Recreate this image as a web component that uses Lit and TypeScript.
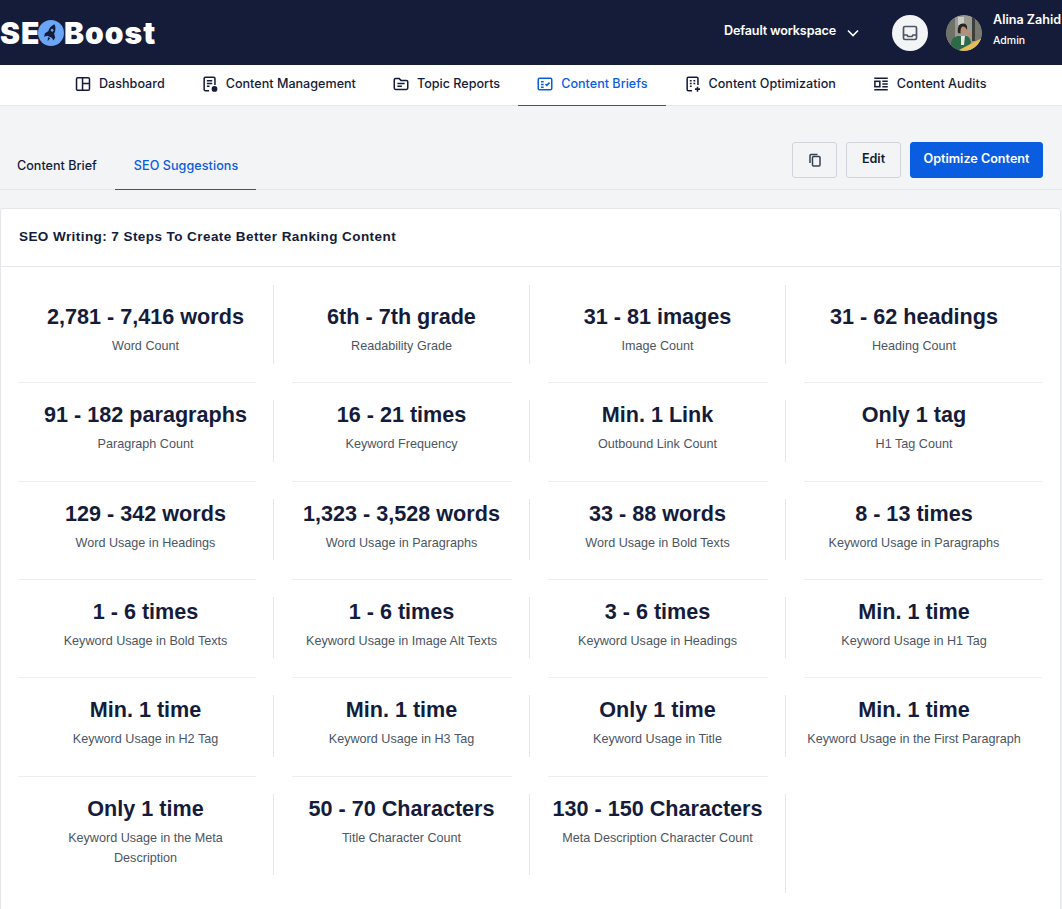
import { LitElement, html, css, svg } from "lit";
import { customElement } from "lit/decorators.js";

const navItems: [string, any, boolean][] = [
  ["Dashboard", svg`<rect x="2.8" y="3" width="14.400" height="14" rx="1.500"/><path d="M9.500 3v14M9.500 9.500h7.700"/>`, false],
  ["Content Management", svg`<path d="M9 17.500H5a1.500 1.500 0 0 1-1.500-1.500V4A1.500 1.500 0 0 1 5 2.500h9A1.500 1.500 0 0 1 15.500 4v7"/><path d="M6.500 6.500h6M6.500 9.500h6M6.500 12.500h3"/><circle cx="15" cy="15.500" r="3.200" fill="currentColor" stroke="none"/>`, false],
  ["Topic Reports", svg`<path d="M2.500 5.500A1.500 1.500 0 0 1 4 4h4l2 2h6a1.500 1.500 0 0 1 1.500 1.500v7A1.500 1.500 0 0 1 16 16H4a1.500 1.500 0 0 1-1.500-1.500z"/><path d="M6 9.500h8M6 12.500h5"/>`, false],
  ["Content Briefs", svg`<rect x="2.500" y="3.500" width="15" height="13" rx="1.500"/><path d="M5.500 7.500h3M5.500 10.500h3M5.500 13.500h3M10.500 10l1.500 1.500 3-3"/>`, true],
  ["Content Optimization", svg`<path d="M9 17.500H5a1.500 1.500 0 0 1-1.500-1.500V4A1.500 1.500 0 0 1 5 2.500h9A1.500 1.500 0 0 1 15.500 4v7"/><path d="M6.500 6.500h2M10.500 6.500h2M6.500 9.500h2M10.500 9.500h2M6.500 12.500h2"/><path d="M15 13v5.500M12.200 15.700h5.600"/>`, false],
  ["Content Audits", svg`<path d="M2.500 3.500h15M2.500 16.500h15M11.500 7h6M11.500 10h6M11.500 13h6"/><rect x="3.200" y="7" width="5.500" height="6"/>`, false],
];

const stats: [string, string][] = [
  ["2,781 - 7,416 words", "Word Count"],
  ["6th - 7th grade", "Readability Grade"],
  ["31 - 81 images", "Image Count"],
  ["31 - 62 headings", "Heading Count"],
  ["91 - 182 paragraphs", "Paragraph Count"],
  ["16 - 21 times", "Keyword Frequency"],
  ["Min. 1 Link", "Outbound Link Count"],
  ["Only 1 tag", "H1 Tag Count"],
  ["129 - 342 words", "Word Usage in Headings"],
  ["1,323 - 3,528 words", "Word Usage in Paragraphs"],
  ["33 - 88 words", "Word Usage in Bold Texts"],
  ["8 - 13 times", "Keyword Usage in Paragraphs"],
  ["1 - 6 times", "Keyword Usage in Bold Texts"],
  ["1 - 6 times", "Keyword Usage in Image Alt Texts"],
  ["3 - 6 times", "Keyword Usage in Headings"],
  ["Min. 1 time", "Keyword Usage in H1 Tag"],
  ["Min. 1 time", "Keyword Usage in H2 Tag"],
  ["Min. 1 time", "Keyword Usage in H3 Tag"],
  ["Only 1 time", "Keyword Usage in Title"],
  ["Min. 1 time", "Keyword Usage in the First Paragraph"],
  ["Only 1 time", "Keyword Usage in the Meta Description"],
  ["50 - 70 Characters", "Title Character Count"],
  ["130 - 150 Characters", "Meta Description Character Count"],
];

@customElement("app-root")
export class AppRoot extends LitElement {
  static styles = css`
    :host { display: block; height: 909px; overflow: hidden; background: #f3f4f6; color: #141c3a; font-family: Inter, "Liberation Sans", sans-serif; }
    svg { display: block; flex: none; }
    .top { height: 65px; background: #141c3a; display: flex; align-items: center; color: #fff; }
    .logo { display: flex; align-items: center; font: 900 30px/1 Inter, sans-serif; letter-spacing: 1px; width: 724px; }
    .logo .se { width: 38px; }
    .ws { display: flex; align-items: center; font-size: 12.600px; font-weight: 600; letter-spacing: -0.15px; width: 168px; margin-top: -4px; }
    .ws svg { margin-left: 10px; margin-top: 4px; }
    .bell { width: 36px; height: 36px; border-radius: 50%; background: #f3f4f6; display: flex; align-items: center; justify-content: center; color: #4b5563; margin-right: 18px; }
    .avatar { width: 36px; height: 36px; border-radius: 50%; margin-right: 11px; }
    .user { display: flex; flex-direction: column; white-space: nowrap; gap: 6px; margin-top: -5px; }
    .user b { font-size: 12.600px; font-weight: 600; line-height: 16px; }
    .user span { font-size: 10.500px; font-weight: 500; line-height: 14px; }
    .nav { height: 40px; background: #fff; border-bottom: 1px solid #e5e7eb; display: flex; padding-left: 56px; }
    .nav a { display: flex; align-items: center; gap: 7px; padding: 0 18px 2px; font-size: 12.600px; font-weight: 500; line-height: 1; height: 41px; box-sizing: border-box; border-bottom: 1px solid transparent; }
    .nav a.on { color: #0a5ce0; border-bottom-color: #0a5ce0; }
    .sub { height: 83px; border-bottom: 1px solid #e5e7eb; display: flex; align-items: flex-end; justify-content: space-between; padding-right: 19px; }
    .tabs { display: flex; }
    .tabs a { display: flex; align-items: center; height: 48px; padding: 0 18px 0 17px; font-size: 12.600px; font-weight: 500; box-sizing: border-box; margin-bottom: -1px; border-bottom: 1px solid transparent; }
    .tabs a.on { color: #0a5ce0; border-bottom-color: #0a5ce0; padding-left: 19px; letter-spacing: 0.05px; }
    .acts { display: flex; gap: 9px; align-self: flex-start; margin-top: 36px; }
    .btn { height: 36px; box-sizing: border-box; border: 1px solid #d1d5db; border-radius: 3px; background: #f3f4f6; display: flex; align-items: center; justify-content: center; font-size: 12.600px; font-weight: 600; padding-bottom: 4px; }
    .copy { width: 45px; padding-bottom: 0; color: #374151; }
    .edit { width: 55px; }
    .go { width: 133px; background: #0a5ce0; border-color: #0a5ce0; color: #fff; }
    .card { margin-top: 18px; width: 1061px; background: #fff; border: 1px solid #e5e7eb; border-radius: 3px 3px 0 0; box-sizing: border-box; height: 720px; }
    .title { height: 58px; box-sizing: border-box; border-bottom: 1px solid #e5e7eb; padding: 0 0 2px 18px; display: flex; align-items: center; font: 700 13.500px/1 "Liberation Sans", sans-serif; letter-spacing: 0.43px; }
    .grid { display: grid; grid-template-columns: repeat(4, 256px); margin-left: 17px; padding-top: 18px; font-family: "Liberation Sans", sans-serif; }
    .cell { text-align: center; display: flex; flex-direction: column; }
    .cell:nth-child(n+5)::before { content: ""; flex: none; height: 1px; background: #eceef0; margin: 0 18px 17px; }
    .cell:nth-child(4n+1)::before { margin-left: 0; }
    .cell:nth-child(4n)::before { margin-right: 0; }
    .body { flex: 1; border-right: 1px solid #e5e7eb; padding: 2px 18px 7.400px; margin-bottom: 19px; }
    .cell:nth-child(-n+4) .body { padding-top: 18.500px; padding-bottom: 8.200px; margin-bottom: 18.500px; }
    .cell:nth-child(4n) .body { border-right: 0; }
    .cell:last-child .body { margin-bottom: 1px; }
    .val { font-size: 21.600px; font-weight: 700; line-height: 26px; white-space: nowrap; }
    .lab { font-size: 12.600px; line-height: 20px; color: #4b5563; margin-top: 6px; }
  `;

  render() {
    return html`
      <div class="top">
        <div class="logo"><span class="se">SE</span><svg width="26" height="26" viewBox="0 0 26 26"><circle cx="13" cy="13" r="13" fill="#6ba5f5"/><g transform="rotate(22 13 13)"><path d="M13 3.500c2.500 2.500 3.500 5.500 3.200 9l2.300 3-.4 3.500-2.600-2H10.500l-2.600 2-.4-3.500 2.300-3c-.3-3.500.7-6.500 3.200-9z" fill="#141c3a"/><circle cx="13" cy="10" r="1.400" fill="#6ba5f5"/><path d="M11.800 18h2.400l-1.200 4z" fill="#141c3a"/></g><path d="M22 0h4v6c-1-2-2.500-4-4-6z" fill="#141c3a"/></svg><span>Boost</span></div>
        <div class="ws">Default workspace
          <svg width="14" height="14" viewBox="0 0 14 14" fill="none" stroke="#fff" stroke-width="1.600"><path d="M2 4.500l5 5 5-5"/></svg>
        </div>
        <div class="bell"><svg width="18" height="18" viewBox="0 0 18 18" fill="none" stroke="currentColor" stroke-width="1.700"><rect x="2.500" y="2.500" width="13" height="13" rx="1.500"/><path d="M2.500 11h3.500l1 1.500h4l1-1.500h3.500"/></svg></div>
        <svg class="avatar" viewBox="0 0 36 36">
          <defs><clipPath id="av"><circle cx="18" cy="18" r="18"/></clipPath></defs>
          <g clip-path="url(#av)">
            <rect width="36" height="36" fill="#9a9c94"/>
            <rect x="0" y="0" width="9" height="36" fill="#6f7268"/>
            <rect x="12" y="2" width="6" height="8" fill="#c9cbc6"/>
            <rect x="26" y="0" width="3" height="26" fill="#3b3e3a"/>
            <rect x="29" y="0" width="7" height="26" fill="#77796f"/>
            <path d="M5 36V28c1-5 4-7 8-7h7c3 0 4 3 5 6l-3 9z" fill="#2c6a48"/>
            <path d="M15 21h4l-1 9h-3z" fill="#e8e8e3"/>
            <circle cx="17" cy="15" r="3.800" fill="#b98d74"/>
            <path d="M12 18c-1-7 2-10 5.500-9.500s4 3 3.500 6.500c-1-2-2-3.500-4-3.500s-2.500 3-2.500 7z" fill="#272320"/>
            <path d="M21 17l3-1 2 5-3 1z" fill="#b98d74"/>
            <path d="M11 36l25-13v13z" fill="#e5bb5c"/>
          </g>
        </svg>
        <div class="user"><b>Alina Zahid</b><span>Admin</span></div>
      </div>
      <div class="nav">
        ${navItems.map(([t, ic, on]) => html`<a class=${on ? "on" : ""}><svg width="18" height="18" viewBox="0 0 20 20" fill="none" stroke="currentColor" stroke-width="1.700">${ic}</svg>${t}</a>`)}
      </div>
      <div class="sub">
        <div class="tabs"><a>Content Brief</a><a class="on">SEO Suggestions</a></div>
        <div class="acts">
          <div class="btn copy"><svg width="16" height="16" viewBox="0 0 16 16" fill="none" stroke="currentColor" stroke-width="1.500"><rect x="5.500" y="4.500" width="7.500" height="9.500" rx="1"/><path d="M10.500 2.500H4a1 1 0 0 0-1 1V11"/></svg></div>
          <div class="btn edit">Edit</div>
          <div class="btn go">Optimize Content</div>
        </div>
      </div>
      <div class="card">
        <div class="title">SEO Writing: 7 Steps To Create Better Ranking Content</div>
        <div class="grid">
          ${stats.map(([v, l]) => html`<div class="cell"><div class="body"><div class="val">${v}</div><div class="lab">${l}</div></div></div>`)}
        </div>
      </div>
    `;
  }
}
